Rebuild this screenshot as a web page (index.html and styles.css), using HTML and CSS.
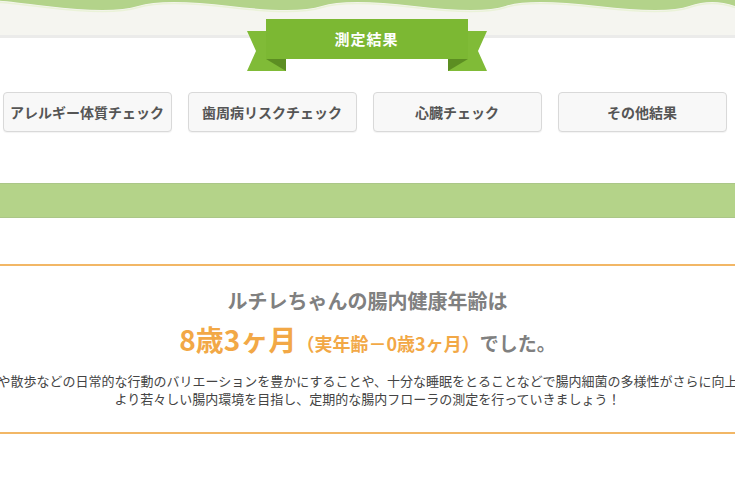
FILE: index.html
```html
<!DOCTYPE html>
<html lang="ja">
<head>
    <meta charset="UTF-8">
    <meta name="viewport" content="width=device-width, initial-scale=1.0">
    <title>測定結果</title>
    <link rel="stylesheet" href="styles.css">
</head>
<body>
    <header class="top">
        <svg class="wave" viewBox="0 0 740 14" preserveAspectRatio="none">
            <path d="M0,0 H740 V6 Q717,-2 694,6 T602,6 T509,6 T417,6 T324,6 T232,6 T139,6 T47,6 T0,2 Z" fill="#b3d38a"/>
            <path d="M740,6 Q717,-2 694,6 T602,6 T509,6 T417,6 T324,6 T232,6 T139,6 T47,6 T0,2" fill="none" stroke="#eaf2d8" stroke-width="1.5" transform="translate(0,1.5)"/>
        </svg>
    </header>

    <div class="ribbon">
        <svg class="ribbon-shape" viewBox="0 0 240 53">
            <polygon points="0,12 39,12 39,52 0,52 9,32" fill="#80bb37"/>
            <polygon points="240,12 201,12 201,52 240,52 231,32" fill="#80bb37"/>
            <polygon points="19,40 39,40 39,52" fill="#5c8e22"/>
            <polygon points="221,40 201,40 201,52" fill="#5c8e22"/>
            <rect x="19" y="0" width="202" height="40" fill="#7cb833"/>
        </svg>
        <span class="ribbon-title">測定結果</span>
    </div>

    <nav class="tabs">
        <button class="tab">アレルギー体質チェック</button>
        <button class="tab">歯周病リスクチェック</button>
        <button class="tab">心臓チェック</button>
        <button class="tab">その他結果</button>
    </nav>

    <div class="green-bar"></div>

    <section class="result">
        <h2 class="result-title">ルチレちゃんの腸内健康年齢は</h2>
        <p class="result-age">
            <span class="age">8歳3ヶ月</span><span class="age-diff">（実年齢－0歳3ヶ月）</span><span class="age-end">でした。</span>
        </p>
        <div class="result-text">
            <span>食事や散歩などの日常的な行動のバリエーションを豊かにすることや、十分な睡眠をとることなどで腸内細菌の多様性がさらに向上し、</span>
            <span>より若々しい腸内環境を目指し、定期的な腸内フローラの測定を行っていきましょう！</span>
        </div>
    </section>
</body>
</html>
```

FILE: styles.css
```css
html, body {
    margin: 0;
    overflow-x: hidden;
}

body {
    font-family: "Noto Sans CJK JP", "Noto Sans", sans-serif;
    background-color: #fff;
    color: #444;
}

.top {
    height: 35px;
    background-color: #f5f5f0;
    border-bottom: 3px solid #ebebea;
}

.wave {
    display: block;
    width: 100%;
    height: 14px;
}

.ribbon {
    position: relative;
    width: 240px;
    height: 53px;
    margin: -19px auto 0;
    left: -1px;
}

.ribbon-shape {
    position: absolute;
    top: 0;
    left: 0;
    width: 240px;
    height: 53px;
}

.ribbon-title {
    position: relative;
    display: block;
    text-align: center;
    line-height: 40px;
    color: #fff;
    font-size: 15px;
    font-weight: bold;
    letter-spacing: 1px;
}

.tabs {
    display: flex;
    justify-content: center;
    gap: 16px;
    margin-top: 20px;
    padding-right: 6px;
}

.tab {
    width: 169px;
    height: 40px;
    flex-shrink: 0;
    background-color: #f8f8f8;
    border: 1px solid #d9d9d9;
    border-radius: 4px;
    box-shadow: 0 1px 1px rgba(0, 0, 0, 0.05);
    font-family: inherit;
    font-size: 14px;
    font-weight: bold;
    color: #555;
    padding: 0;
}

.green-bar {
    height: 33px;
    margin-top: 51px;
    background-color: #b4d389;
    border-top: 1px solid #abc688;
    border-bottom: 1px solid #abc688;
}

.result {
    margin-top: 46px;
    border-top: 2px solid #f2b766;
    border-bottom: 2px solid #f2b766;
    padding: 22px 0 24px;
    text-align: center;
}

.result-title {
    margin: 0;
    font-size: 20px;
    line-height: 26px;
    font-weight: bold;
    color: #808080;
}

.result-age {
    margin: 6px 0 0;
    line-height: 38px;
    color: #808080;
    white-space: nowrap;
}

.age {
    font-size: 28px;
    font-weight: bold;
    color: #f2a846;
}

.age-diff {
    font-size: 18px;
    font-weight: bold;
    color: #f2a846;
}

.age-end {
    font-size: 19px;
    font-weight: bold;
}

.result-text {
    display: flex;
    flex-direction: column;
    align-items: center;
    margin-top: 9px;
    font-size: 13px;
    line-height: 18px;
    color: #444;
}

.result-text span {
    white-space: nowrap;
}
```
